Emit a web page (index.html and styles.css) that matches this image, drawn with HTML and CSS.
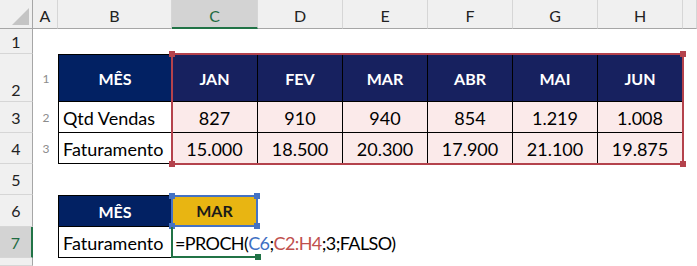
FILE: index.html
```html
<!DOCTYPE html>
<html lang="pt-BR">
<head>
<meta charset="utf-8">
<title>PROCH</title>
<link rel="stylesheet" href="styles.css">
</head>
<body>
<div class="sheet">
  <div class="corner row-h col-rh"><span class="tri"></span></div>
  <div class="ch row-h col-a">A</div>
  <div class="ch row-h col-b">B</div>
  <div class="ch ch-sel row-h col-c">C</div>
  <div class="ch row-h col-d">D</div>
  <div class="ch row-h col-e">E</div>
  <div class="ch row-h col-f">F</div>
  <div class="ch row-h col-g">G</div>
  <div class="ch row-h col-h">H</div>
  <div class="ch row-h col-x"></div>

  <div class="rh row-1 col-rh">1</div>
  <div class="rh row-2 col-rh rh-low">2</div>
  <div class="rh row-3 col-rh">3</div>
  <div class="rh row-4 col-rh">4</div>
  <div class="rh row-5 col-rh">5</div>
  <div class="rh row-6 col-rh">6</div>
  <div class="rh rh-sel row-7 col-rh">7</div>
  <div class="rh row-8 col-rh"></div>

  <div class="idx row-2 col-a">1</div>
  <div class="idx row-3 col-a">2</div>
  <div class="idx row-4 col-a">3</div>

  <div class="th th-b top left row-2 col-b">MÊS</div>
  <div class="th top row-2 col-c">JAN</div>
  <div class="th top row-2 col-d">FEV</div>
  <div class="th top row-2 col-e">MAR</div>
  <div class="th top row-2 col-f">ABR</div>
  <div class="th top row-2 col-g">MAI</div>
  <div class="th top row-2 col-h">JUN</div>

  <div class="td label left row-3 col-b">Qtd Vendas</div>
  <div class="td num row-3 col-c">827</div>
  <div class="td num row-3 col-d">910</div>
  <div class="td num row-3 col-e">940</div>
  <div class="td num row-3 col-f">854</div>
  <div class="td num row-3 col-g">1.219</div>
  <div class="td num row-3 col-h">1.008</div>

  <div class="td label left row-4 col-b">Faturamento</div>
  <div class="td num row-4 col-c">15.000</div>
  <div class="td num row-4 col-d">18.500</div>
  <div class="td num row-4 col-e">20.300</div>
  <div class="td num row-4 col-f">17.900</div>
  <div class="td num row-4 col-g">21.100</div>
  <div class="td num row-4 col-h">19.875</div>

  <div class="th th-b top left row-6 col-b">MÊS</div>
  <div class="th th-y top row-6 col-c">MAR</div>
  <div class="td label left row-7 col-b">Faturamento</div>
  <div class="td formula row-7 col-c">=PROCH(<span class="ref-b">C6</span>;<span class="ref-r">C2:H4</span>;3;FALSO)<span class="caret"></span></div>

  <div class="range range-red row-2-4 col-c-h">
    <span class="h h-tl"></span><span class="h h-tr"></span><span class="h h-bl"></span><span class="h h-br"></span>
  </div>
  <div class="range range-blue row-6 col-c">
    <span class="h h-tl"></span><span class="h h-tr"></span><span class="h h-bl"></span><span class="h h-br"></span>
  </div>
  <div class="active row-7 col-c"><span class="h h-br"></span></div>
</div>
</body>
</html>
```

FILE: styles.css
```css
* { box-sizing: border-box; }
html, body { margin: 0; padding: 0; background: #fff; }
body { font-family: Lato, "Open Sans", Arial, sans-serif; color: #000; }

.sheet {
  width: 697px;
  height: 266px;
  overflow: hidden;
  display: grid;
  grid-template-columns: 33px 25px 114px 86px 85px 85px 85px 85px 85px 1fr;
  grid-template-rows: 29px 25px 48px 31px 31px 31px 32px 31px 1fr;
}

.row-h { grid-row: 1; }
.row-1 { grid-row: 2; }
.row-2 { grid-row: 3; }
.row-3 { grid-row: 4; }
.row-4 { grid-row: 5; }
.row-5 { grid-row: 6; }
.row-6 { grid-row: 7; }
.row-7 { grid-row: 8; }
.row-8 { grid-row: 9; }
.row-2-4 { grid-row: 3 / 6; }

.col-rh { grid-column: 1; }
.col-a { grid-column: 2; }
.col-b { grid-column: 3; }
.col-c { grid-column: 4; }
.col-d { grid-column: 5; }
.col-e { grid-column: 6; }
.col-f { grid-column: 7; }
.col-g { grid-column: 8; }
.col-h { grid-column: 9; }
.col-x { grid-column: 10; }
.col-c-h { grid-column: 4 / 10; }

/* headers */
.corner {
  background: #f0f0f0;
  border-right: 1px solid #a6a6a6;
  border-bottom: 1px solid #a6a6a6;
  display: flex;
  align-items: flex-end;
  justify-content: flex-end;
  padding: 0 3px 3px 0;
}
.tri {
  width: 17px;
  height: 17px;
  background: #c4c4c4;
  clip-path: polygon(100% 0, 100% 100%, 0 100%);
}
.ch {
  background: #f0f0f0;
  border-right: 1px solid #d6d6d6;
  border-bottom: 1px solid #a6a6a6;
  display: flex;
  align-items: center;
  justify-content: center;
  font-size: 16px;
  padding-top: 3px;
  color: #222;
}
.ch-sel {
  background: #d3d3d3;
  color: #1e6b41;
  border-bottom: 2px solid #217346;
}
.rh {
  background: #f0f0f0;
  border-right: 1px solid #a6a6a6;
  border-bottom: 1px solid #d6d6d6;
  display: flex;
  align-items: center;
  justify-content: center;
  font-size: 16px;
  color: #222;
}
.rh-low { align-items: flex-end; padding-bottom: 2px; }
.rh-sel {
  background: #d3d3d3;
  color: #1e6b41;
  border-right: 2px solid #217346;
}

.idx {
  display: flex;
  align-items: center;
  justify-content: center;
  font-size: 12px;
  color: #8c8c8c;
  padding-left: 1px;
}

/* table cells */
.th, .td {
  border-right: 1px solid #000;
  border-bottom: 1px solid #000;
  display: flex;
  align-items: center;
}
.top { border-top: 1px solid #000; }
.left { border-left: 1px solid #000; }
.th {
  justify-content: center;
  background: #17215f;
  color: #fff;
  font-weight: 700;
  font-size: 16px;
}
.th-b { background: #022163; }
.th-y { background: #e8b512; color: #1a1a1a; border-top: none; }
.td {
  font-size: 18px;
  padding-top: 1px;
}
.label { background: #fff; padding-left: 4px; }
.num { background: #fbeaea; justify-content: center; }
.formula {
  background: #fff;
  border: none;
  white-space: nowrap;
  overflow: visible;
  padding-left: 3px;
  letter-spacing: -0.6px;
  position: relative;
  z-index: 1;
}
.ref-b { color: #3f6fc3; }
.ref-r { color: #c0504d; }
.caret {
  display: inline-block;
  width: 1px;
  height: 21px;
  background: #333;
  margin-left: 2px;
}

/* reference highlights */
.range {
  position: relative;
  margin: -1px;
  z-index: 2;
}
.range-red { border: 2px solid #b4424c; }
.range-blue { border: 2px solid #4472c4; margin: 0 0 0 -1px; }
.h {
  position: absolute;
  width: 6px;
  height: 6px;
}
.range-red .h { background: #b4424c; }
.range-blue .h { background: #4472c4; }
.h-tl { top: -4px; left: -4px; }
.h-tr { top: -4px; right: -4px; }
.h-bl { bottom: -4px; left: -4px; }
.h-br { bottom: -4px; right: -4px; }

.active {
  position: relative;
  z-index: 2;
  margin-left: -1px;
  border-left: 2px solid #217346;
  border-bottom: 2px solid #217346;
}
.active .h { background: #217346; right: -3px; bottom: -4px; }
```
